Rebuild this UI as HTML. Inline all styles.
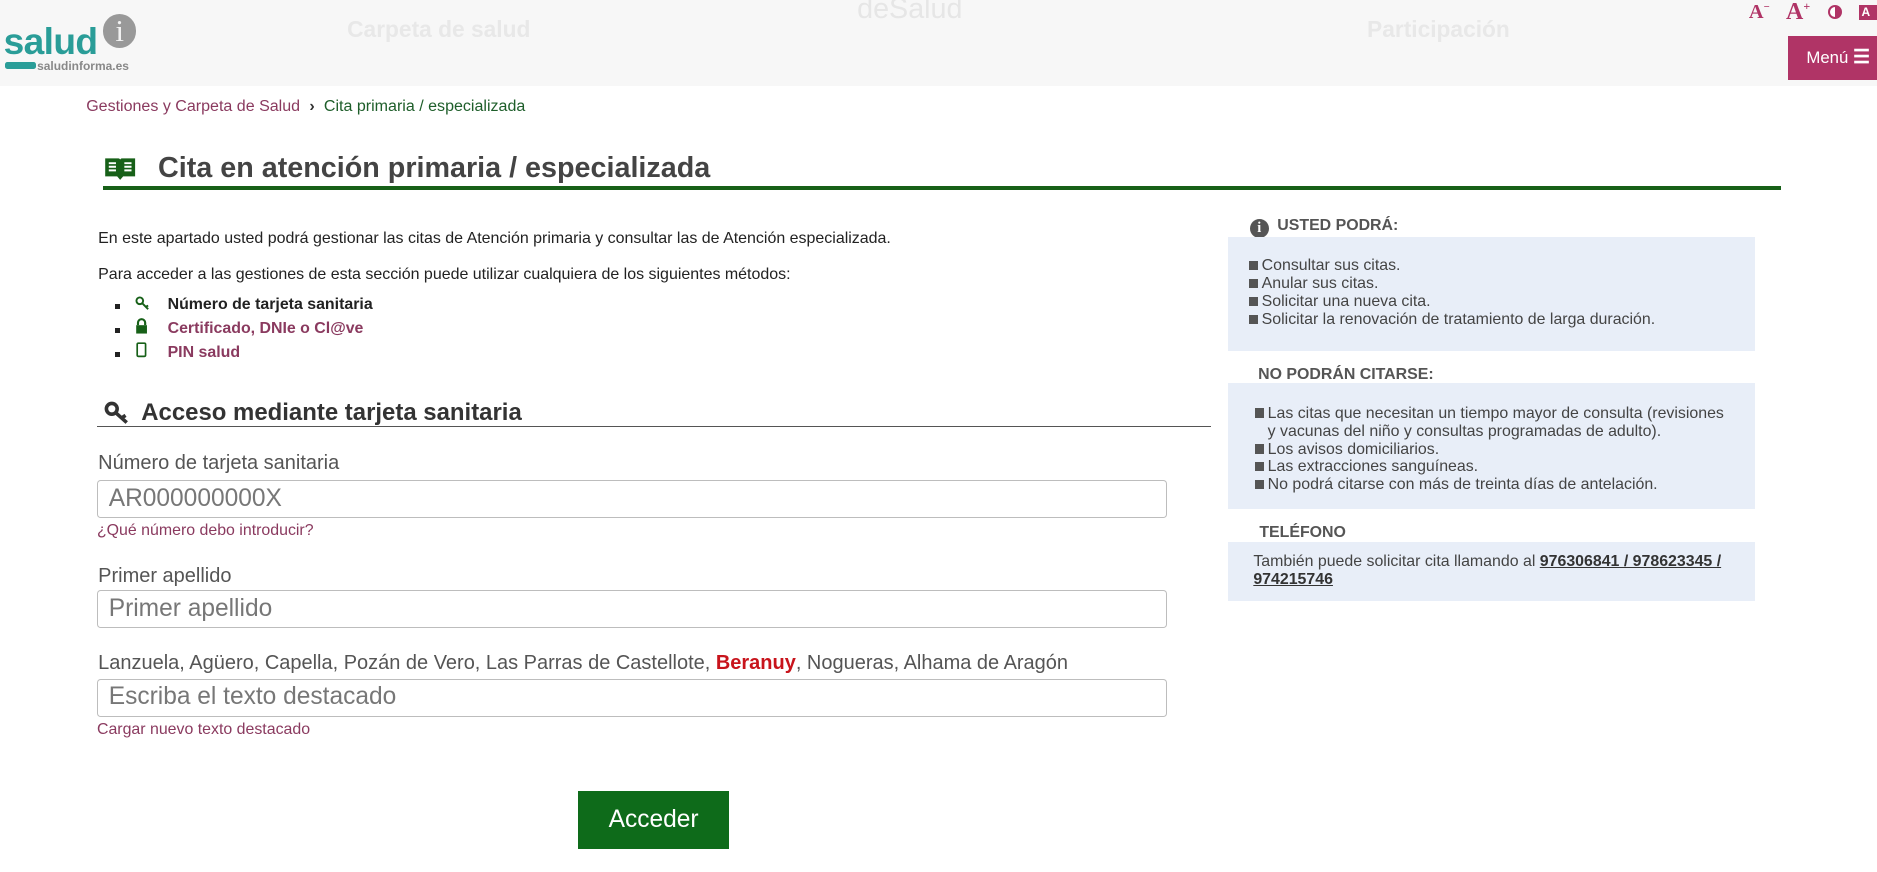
<!DOCTYPE html>
<html><head><meta charset="utf-8">
<style>
html,body{margin:0;padding:0;background:#fff;overflow:hidden}
#w{zoom:1.19707;width:1568px;height:728px;position:relative;font-family:"Liberation Sans",Arial,sans-serif}
.a{position:absolute;white-space:nowrap}
.inp{position:absolute;left:81px;width:894px;height:32px;border:1px solid #bdbdbd;border-radius:3px;box-sizing:border-box;font-size:20.5px;color:#777;padding:3px 9px;line-height:24px}
.lbl{font-size:16.7px;color:#555}
.lnk{font-size:13.3px;color:#8a3a5f}
.box{position:absolute;left:1026px;width:440px;background:#e8eef8}
.box div{font-size:13.3px;color:#444;line-height:15px}
.sq{display:inline-block;width:8px;height:8px;background:#555;margin-right:3px}
.rh{font-size:13.3px;font-weight:bold;color:#555}
</style></head><body><div id="w">
<div class="a" style="left:0;top:0;width:1568px;height:72px;background:#f7f7f7"></div>
<div class="a" style="left:3px;top:17px;font-size:31px;font-weight:bold;color:#2a9d98;letter-spacing:-0.5px">salud</div>
<div class="a" style="left:86px;top:12px;width:28px;height:28px;border-radius:50%;background:#999;color:#f2f2f2;font:26px 'Liberation Serif',serif;text-align:center;line-height:28px">i</div>
<div class="a" style="left:4px;top:52px;width:26px;height:6px;background:#2a9d98;border-radius:2px"></div>
<div class="a" style="left:31px;top:49px;font-size:10px;font-weight:bold;color:#888">saludinforma.es</div>
<div class="a" style="left:290px;top:13px;font-size:19px;font-weight:bold;color:#e8e8e8">Carpeta de salud</div>
<div class="a" style="left:716px;top:-6px;font-size:24px;color:#e6e6e6">deSalud</div>
<div class="a" style="left:1142px;top:13px;font-size:19px;font-weight:bold;color:#e8e8e8">Participación</div>
<div class="a" style="left:1461px;top:1px;font:bold 17px 'Liberation Serif',serif;color:#b03466">A<sup style="font-size:9px">−</sup></div>
<div class="a" style="left:1492px;top:-1px;font:bold 20px 'Liberation Serif',serif;color:#b03466">A<sup style="font-size:10px">+</sup></div>
<div class="a" style="left:1527px;top:4px;width:12px;height:12px;border:2px solid #b03466;border-radius:50%;box-sizing:border-box;background:linear-gradient(90deg,#fff 50%,#b03466 50%)"></div>
<div class="a" style="left:1553px;top:4px;width:15px;height:13px;background:#b03466;color:#fff;font-size:10px;font-weight:bold;line-height:13px;padding-left:2px">A</div>
<div class="a" style="left:1494px;top:30px;width:74px;height:37px;background:#b03466;color:#fff;font-size:14px;line-height:37px;padding-left:15px;box-sizing:border-box">Menú <b style="font-size:16px">☰</b></div>

<div class="a" style="left:72px;top:81px;font-size:13.4px;color:#8a3a5f">Gestiones y Carpeta de Salud <b style="color:#333;margin:0 4px">›</b> <span style="color:#1e5e2a">Cita primaria / especializada</span></div>

<svg class="a" style="left:87px;top:130px" width="27" height="21" viewBox="0 0 27 21"><path d="M1 2h11c1 0 1.5 1 1.5 1S14 2 15 2h11v15H16l-2.5 3-2.5-3H1z" fill="#176018"/><path d="M4 6h6M4 9h6M4 12h6M17 6h6M17 9h6M17 12h6" stroke="#fff" stroke-width="1.6"/></svg>
<div class="a" style="left:132px;top:127px;font-size:24px;font-weight:bold;color:#444">Cita en atención primaria / especializada</div>
<div class="a" style="left:86px;top:155px;width:1402px;height:4px;background:#176018"></div>

<div class="a" style="left:82px;top:192px;font-size:13.35px;color:#222">En este apartado usted podrá gestionar las citas de Atención primaria y consultar las de Atención especializada.</div>
<div class="a" style="left:82px;top:222px;font-size:13.35px;color:#222">Para acceder a las gestiones de esta sección puede utilizar cualquiera de los siguientes métodos:</div>
<div class="a" style="left:96px;top:254px;width:4px;height:4px;background:#222"></div>
<div class="a" style="left:96px;top:274px;width:4px;height:4px;background:#222"></div>
<div class="a" style="left:96px;top:294px;width:4px;height:4px;background:#222"></div>
<svg class="a" style="left:113px;top:247px" width="14" height="12" viewBox="0 0 14 12"><circle cx="4" cy="4" r="2.8" fill="none" stroke="#176018" stroke-width="1.6"/><path d="M6 6l5 5M9 9l2-1" stroke="#176018" stroke-width="1.6"/></svg>
<svg class="a" style="left:113px;top:266px" width="11" height="13" viewBox="0 0 11 13"><path d="M2.5 6V4a3 3 0 0 1 6 0v2" fill="none" stroke="#176018" stroke-width="1.8"/><rect x="1" y="6" width="9" height="7" fill="#176018"/></svg>
<svg class="a" style="left:114px;top:286px" width="9" height="13" viewBox="0 0 9 13"><rect x="1" y="1" width="7" height="11" rx="1" fill="none" stroke="#176018" stroke-width="1.4"/></svg>
<div class="a" style="left:140px;top:247px;font-size:13.3px;font-weight:bold;color:#222">Número de tarjeta sanitaria</div>
<div class="a" style="left:140px;top:267px;font-size:13.3px;font-weight:bold;color:#8a3a5f">Certificado, DNIe o Cl@ve</div>
<div class="a" style="left:140px;top:287px;font-size:13.3px;font-weight:bold;color:#8a3a5f">PIN salud</div>

<svg class="a" style="left:87px;top:335px" width="22" height="20" viewBox="0 0 22 20"><circle cx="6.5" cy="6.5" r="4.5" fill="none" stroke="#333" stroke-width="3"/><path d="M10 10l9 8M15 14l3-2" stroke="#333" stroke-width="3"/></svg>
<div class="a" style="left:118px;top:333px;font-size:20px;font-weight:bold;color:#333">Acceso mediante tarjeta sanitaria</div>
<div class="a" style="left:81px;top:356px;width:931px;height:1px;background:#555"></div>

<div class="a lbl" style="left:82px;top:378px">Número de tarjeta sanitaria</div>
<div class="inp" style="top:401px">AR000000000X</div>
<div class="a lnk" style="left:81px;top:436px">¿Qué número debo introducir?</div>
<div class="a lbl" style="left:82px;top:472px">Primer apellido</div>
<div class="inp" style="top:493px">Primer apellido</div>
<div class="a lbl" style="left:82px;top:545px">Lanzuela, Agüero, Capella, Pozán de Vero, Las Parras de Castellote, <b style="color:#c8141c">Beranuy</b>, Nogueras, Alhama de Aragón</div>
<div class="inp" style="top:567px">Escriba el texto destacado</div>
<div class="a lnk" style="left:81px;top:602px">Cargar nuevo texto destacado</div>
<div class="a" style="left:483px;top:661px;width:126px;height:48px;background:#0e6b1a;color:#fff;font-size:20.5px;text-align:center;line-height:48px">Acceder</div>

<div class="a" style="left:1044px;top:183px;width:16px;height:16px;border-radius:50%;background:#555;color:#fff;font:bold 12px 'Liberation Serif',serif;text-align:center;line-height:16px">i</div>
<div class="a rh" style="left:1067px;top:181px">USTED PODRÁ:</div>
<div class="box" style="top:198px;height:95px;padding:17px 0 0 17px;box-sizing:border-box">
<div><span class="sq"></span>Consultar sus citas.</div><div><span class="sq"></span>Anular sus citas.</div><div><span class="sq"></span>Solicitar una nueva cita.</div><div><span class="sq"></span>Solicitar la renovación de tratamiento de larga duración.</div></div>
<div class="a rh" style="left:1051px;top:306px">NO PODRÁN CITARSE:</div>
<div class="box" style="top:320px;height:105px;padding:18px 10px 0 22px;box-sizing:border-box">
<div><span class="sq"></span>Las citas que necesitan un tiempo mayor de consulta (revisiones<br><span style="padding-left:11px">y vacunas del niño y consultas programadas de adulto).</span></div><div><span class="sq"></span>Los avisos domiciliarios.</div><div><span class="sq"></span>Las extracciones sanguíneas.</div><div><span class="sq"></span>No podrá citarse con más de treinta días de antelación.</div></div>
<div class="a rh" style="left:1052px;top:438px">TELÉFONO</div>
<div class="box" style="top:453px;height:49px;padding:9px 0 0 21px;box-sizing:border-box">
<div style="color:#444">También puede solicitar cita llamando al <b style="text-decoration:underline;color:#333">976306841 / 978623345 /<br>974215746</b></div></div>
</div></body></html>
